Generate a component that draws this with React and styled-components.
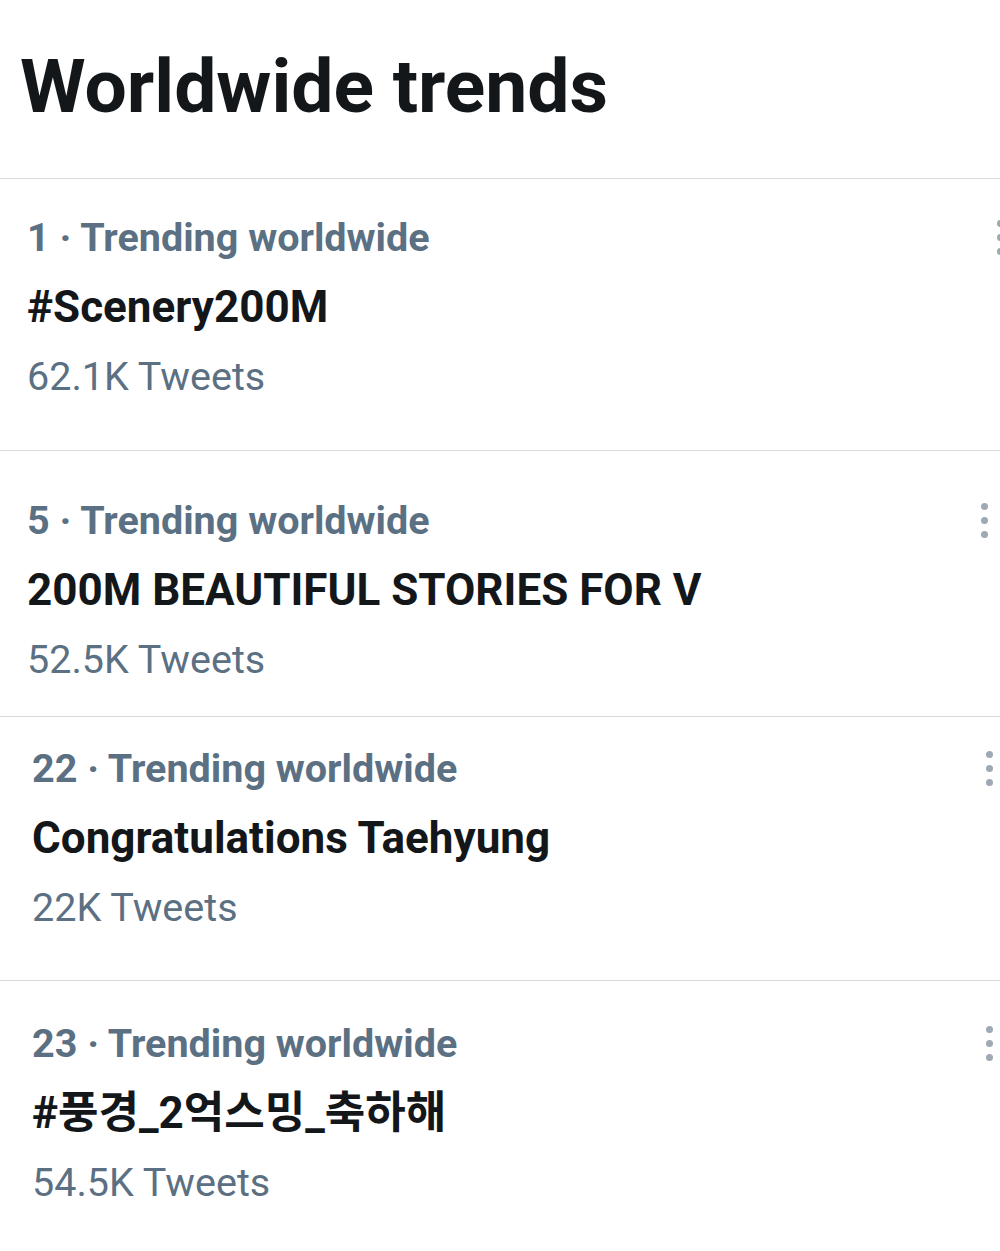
import React from "react";
import styled, { createGlobalStyle } from "styled-components";

const trends = [
  { rank: 1, name: "#Scenery200M", count: "62.1K", pt: 23, pb: 38, pl: 27, dotsRight: -4 },
  { rank: 5, name: "200M BEAUTIFUL STORIES FOR V", count: "52.5K", pt: 34, pb: 21, pl: 27, dotsRight: 12 },
  { rank: 22, name: "Congratulations Taehyung", count: "22K", pt: 16, pb: 37, pl: 32, dotsRight: 7 },
  { rank: 23, name: "#풍경_2억스밍_축하해", count: "54.5K", pt: 27, pb: 40, pl: 32, dotsRight: 7 },
];

function TrendsPage() {
  return (
    <Page>
      <Header>
        <h1>Worldwide trends</h1>
      </Header>
      {trends.map((t) => (
        <TrendRow key={t.rank} $pt={t.pt} $pb={t.pb} $pl={t.pl}>
          <MetaLine>
            <span>{t.rank} · Trending worldwide</span>
            <Dots $right={t.dotsRight}>
              <i />
              <i />
              <i />
            </Dots>
          </MetaLine>
          <TrendName>{t.name}</TrendName>
          <TweetCount>{t.count} Tweets</TweetCount>
        </TrendRow>
      ))}
    </Page>
  );
}

const GlobalStyle = createGlobalStyle`
  html, body {
    margin: 0;
    padding: 0;
    background: #ffffff;
  }
  body {
    font-family: Roboto, "Noto Sans", "Noto Sans CJK KR", sans-serif;
    -webkit-font-smoothing: antialiased;
  }
`;

const Page = styled.div`
  width: 1000px;
  height: 1251px;
  overflow: hidden;
  background: #ffffff;
`;

const Header = styled.div`
  height: 178px;
  display: flex;
  align-items: flex-start;
  padding-left: 20px;
  h1 {
    margin: 0;
    margin-top: 40px;
    font-size: 75px;
    line-height: 92px;
    font-weight: 700;
    color: #14171a;
  }
`;

const TrendRow = styled.div`
  border-top: 1px solid #d6dbe0;
  padding: ${(p) => p.$pt}px 0 ${(p) => p.$pb}px ${(p) => p.$pl}px;
  display: flex;
  flex-direction: column;
`;

const MetaLine = styled.div`
  display: flex;
  align-items: center;
  justify-content: space-between;
  height: 70px;
  font-size: 39.5px;
  font-weight: 700;
  color: #5b7083;
`;

const Dots = styled.div`
  display: flex;
  flex-direction: column;
  gap: 7px;
  margin-right: ${(p) => p.$right}px;
  i {
    display: block;
    width: 7px;
    height: 7px;
    border-radius: 50%;
    background: #9ea9b4;
  }
`;

const TrendName = styled.div`
  height: 70px;
  line-height: 70px;
  font-size: 44px;
  font-weight: 700;
  color: #14171a;
  white-space: nowrap;
`;

const TweetCount = styled.div`
  height: 70px;
  line-height: 70px;
  font-size: 39.5px;
  font-weight: 400;
  color: #5b7083;
`;

export default function App() {
  return (
    <>
      <GlobalStyle />
      <TrendsPage />
    </>
  );
}
